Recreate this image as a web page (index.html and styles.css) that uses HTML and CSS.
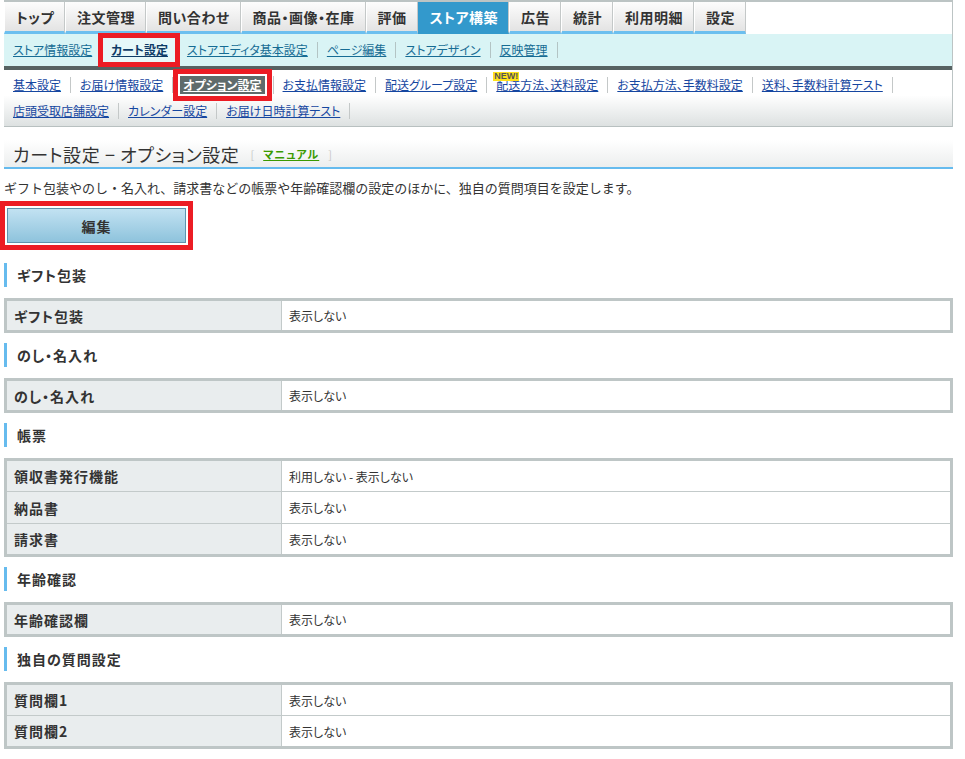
FILE: index.html
```html
<!DOCTYPE html>
<html lang="ja">
<head>
<meta charset="utf-8">
<title>カート設定 - オプション設定</title>
<link rel="stylesheet" href="styles.css">
</head>
<body>
<div class="page">
  <div class="header">
    <ul class="tabs">
      <li class="tab">トップ</li>
      <li class="tab">注文管理</li>
      <li class="tab">問い合わせ</li>
      <li class="tab">商品・画像・在庫</li>
      <li class="tab">評価</li>
      <li class="tab tab-active">ストア構築</li>
      <li class="tab">広告</li>
      <li class="tab">統計</li>
      <li class="tab">利用明細</li>
      <li class="tab">設定</li>
    </ul>
    <ul class="subnav">
      <li><a href="#">ストア情報設定</a></li>
      <li class="sub-active"><a href="#">カート設定</a></li>
      <li><a href="#">ストアエディタ基本設定</a></li>
      <li><a href="#">ページ編集</a></li>
      <li><a href="#">ストアデザイン</a></li>
      <li><a href="#">反映管理</a></li>
    </ul>
    <div class="menu">
      <ul class="menu-row">
        <li><a href="#">基本設定</a></li>
        <li><a href="#">お届け情報設定</a></li>
        <li class="menu-active"><a href="#">オプション設定</a></li>
        <li><a href="#">お支払情報設定</a></li>
        <li><a href="#">配送グループ設定</a></li>
        <li class="has-new"><span class="new-badge">NEW!</span><a href="#">配送方法、送料設定</a></li>
        <li><a href="#">お支払方法、手数料設定</a></li>
        <li><a href="#">送料、手数料計算テスト</a></li>
      </ul>
      <ul class="menu-row">
        <li><a href="#">店頭受取店舗設定</a></li>
        <li><a href="#">カレンダー設定</a></li>
        <li><a href="#">お届け日時計算テスト</a></li>
      </ul>
    </div>
  </div>

  <div class="title-bar">
    <h1 class="title">カート設定 − オプション設定</h1>
    <span class="manual"><span class="bracket">[</span><a href="#">マニュアル</a><span class="bracket">]</span></span>
  </div>

  <p class="desc">ギフト包装やのし・名入れ、請求書などの帳票や年齢確認欄の設定のほかに、独自の質問項目を設定します。</p>

  <button class="edit-btn" type="button">編集</button>

  <h2 class="sec sec-first">ギフト包装</h2>
  <table class="info">
    <tr><th>ギフト包装</th><td>表示しない</td></tr>
  </table>

  <h2 class="sec">のし・名入れ</h2>
  <table class="info">
    <tr><th>のし・名入れ</th><td>表示しない</td></tr>
  </table>

  <h2 class="sec">帳票</h2>
  <table class="info">
    <tr><th>領収書発行機能</th><td>利用しない - 表示しない</td></tr>
    <tr><th>納品書</th><td>表示しない</td></tr>
    <tr><th>請求書</th><td>表示しない</td></tr>
  </table>

  <h2 class="sec">年齢確認</h2>
  <table class="info">
    <tr><th>年齢確認欄</th><td>表示しない</td></tr>
  </table>

  <h2 class="sec">独自の質問設定</h2>
  <table class="info">
    <tr><th>質問欄1</th><td>表示しない</td></tr>
    <tr><th>質問欄2</th><td>表示しない</td></tr>
  </table>
</div>
</body>
</html>
```

FILE: styles.css
```css
* { box-sizing: border-box; }

body {
  margin: 0;
  background: #fff;
  color: #333;
  font-family: "Noto Sans CJK JP", "Liberation Sans", sans-serif;
  font-feature-settings: "palt";
}

ul { list-style: none; margin: 0; padding: 0; }

.page {
  width: 949px;
  margin-left: 4px;
}

/* ---------- header ---------- */
.header {
  border-top: 2px solid #bcc4c4;
  border-right: 1px solid #bcc4c4;
}

.tabs {
  display: flex;
  height: 32px;
  background: #fff;
}

.tab {
  display: flex;
  align-items: center;
  padding: 0 10px 0 11px;
  font-size: 14px;
  font-weight: bold;
  letter-spacing: 0.5px;
  color: #333;
  background: linear-gradient(#fdfdfd, #e3e3e3);
  border-left: 1px solid #fff;
  border-right: 1px solid #c4c8c8;
  border-bottom: 3px solid #6cbfef;
}

.tab-active {
  background: #3399cc;
  color: #fff;
  border-bottom-color: #3399cc;
  border-left-color: #3399cc;
}

.subnav {
  display: flex;
  align-items: center;
  height: 32px;
  background: #d9f4f5;
}

.subnav li {
  padding: 0 9px;
  border-right: 1px solid #b3c4c4;
  font-size: 12px;
  line-height: 16px;
}

.subnav a {
  color: #166c94;
  text-decoration: underline;
}

.sub-active a {
  display: inline-block;
  padding: 4px 7px 4px 8px;
  margin: 0 -7px 0 -8px;
  font-weight: bold;
  color: #0e3b66;
  background: #e6f8f9;
  outline: 5px solid #ec1c24;
}

.menu {
  border-top: 4px solid #566262;
  border-bottom: 1px solid #b8c0c0;
  background: linear-gradient(#fff 45%, #dde1e1);
  padding: 2px 0;
}

.menu-row {
  display: flex;
  align-items: center;
  height: 26px;
}

.menu-row li {
  position: relative;
  padding: 0 9px;
  border-right: 1px solid #c4c8c8;
  font-size: 12px;
  line-height: 16px;
}

.menu-row a {
  color: #1546a0;
  text-decoration: underline;
}

.menu-active a {
  display: inline-block;
  padding: 1px 3px;
  margin: 0 -1px 0 -2px;
  font-weight: bold;
  color: #fff;
  background: #5f6b6b;
  box-shadow: 0 0 0 2px #fff;
  outline: 5px solid #ec1c24;
  outline-offset: 2px;
}

.new-badge {
  position: absolute;
  left: 6px;
  top: -5px;
  padding: 0 1px;
  font-size: 9px;
  line-height: 9px;
  font-weight: bold;
  color: #555;
  background: #ffe21a;
  font-family: "Liberation Sans", sans-serif;
}

/* ---------- title ---------- */
.title-bar {
  display: flex;
  align-items: center;
  height: 29px;
  margin-top: 13px;
  padding-left: 9px;
  background: linear-gradient(#fff, #eceeee);
  border-bottom: 2px solid #66bbee;
}

.title {
  margin: 0;
  font-size: 18px;
  font-weight: normal;
  letter-spacing: 0.6px;
  color: #333;
}

.manual {
  display: flex;
  gap: 9px;
  margin-left: 11px;
  font-size: 11px;
}

.bracket { color: #c8c8c8; }

.manual a {
  color: #3a9a00;
  font-weight: bold;
  letter-spacing: 1px;
  text-decoration: underline;
}

.desc {
  margin: 10px 0 0;
  font-size: 13px;
  line-height: 18px;
  font-feature-settings: normal;
}

.edit-btn {
  display: block;
  width: 179px;
  height: 35px;
  margin: 11px 0 0 3px;
  padding: 0;
  font-family: inherit;
  font-size: 14px;
  font-weight: bold;
  letter-spacing: 1px;
  color: #333;
  background: linear-gradient(#c2e2f2, #8ec3dc);
  border: 1px solid #5e93ad;
  border-radius: 0;
  outline: 5px solid #ec1c24;
  outline-offset: 2px;
}

/* ---------- sections ---------- */
.sec {
  margin: 10px 0 11px;
  height: 24px;
  padding-left: 10px;
  border-left: 3px solid #66bbee;
  font-size: 14px;
  line-height: 24px;
  font-weight: bold;
  letter-spacing: 1px;
  color: #333;
}

.sec-first { margin-top: 20px; }

.info {
  width: 100%;
  border-collapse: collapse;
  border: 3px solid #bec6c6;
}

.info th,
.info td {
  height: 32px;
  padding: 0 7px;
  border: 1px solid #c3caca;
  text-align: left;
}

.info th {
  width: 276px;
  background: #e9edee;
  font-size: 14px;
  font-weight: bold;
  letter-spacing: 1px;
  color: #333;
}

.info td {
  font-size: 12px;
  color: #333;
}
```
